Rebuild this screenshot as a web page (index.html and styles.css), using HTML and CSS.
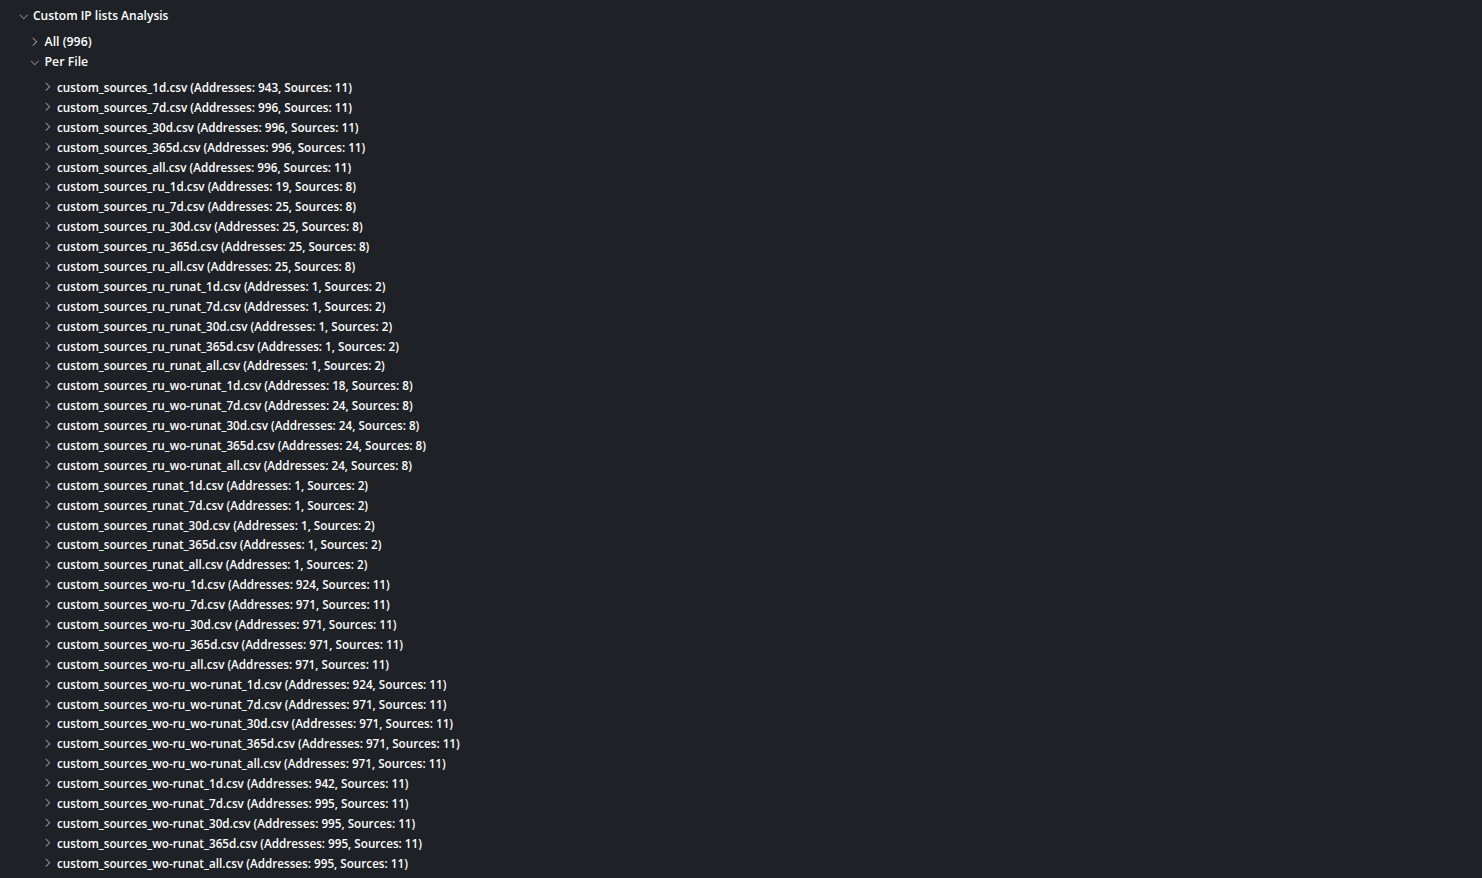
FILE: index.html
```html
<!DOCTYPE html>
<html>
<head>
<meta charset="utf-8">
<link rel="stylesheet" href="styles.css">
</head>
<body>
<div class="tree">
  <div class="row lvl0"><span class="chev down"></span><span class="label">Custom IP lists Analysis</span></div>
  <div class="row lvl1 first"><span class="chev right"></span><span class="label">All (996)</span></div>
  <div class="row lvl1"><span class="chev down"></span><span class="label">Per File</span></div>
  <div class="files">
    <div class="row lvl2"><span class="chev right"></span><span class="label">custom_sources_1d.csv (Addresses: 943, Sources: 11)</span></div>
    <div class="row lvl2"><span class="chev right"></span><span class="label">custom_sources_7d.csv (Addresses: 996, Sources: 11)</span></div>
    <div class="row lvl2"><span class="chev right"></span><span class="label">custom_sources_30d.csv (Addresses: 996, Sources: 11)</span></div>
    <div class="row lvl2"><span class="chev right"></span><span class="label">custom_sources_365d.csv (Addresses: 996, Sources: 11)</span></div>
    <div class="row lvl2"><span class="chev right"></span><span class="label">custom_sources_all.csv (Addresses: 996, Sources: 11)</span></div>
    <div class="row lvl2"><span class="chev right"></span><span class="label">custom_sources_ru_1d.csv (Addresses: 19, Sources: 8)</span></div>
    <div class="row lvl2"><span class="chev right"></span><span class="label">custom_sources_ru_7d.csv (Addresses: 25, Sources: 8)</span></div>
    <div class="row lvl2"><span class="chev right"></span><span class="label">custom_sources_ru_30d.csv (Addresses: 25, Sources: 8)</span></div>
    <div class="row lvl2"><span class="chev right"></span><span class="label">custom_sources_ru_365d.csv (Addresses: 25, Sources: 8)</span></div>
    <div class="row lvl2"><span class="chev right"></span><span class="label">custom_sources_ru_all.csv (Addresses: 25, Sources: 8)</span></div>
    <div class="row lvl2"><span class="chev right"></span><span class="label">custom_sources_ru_runat_1d.csv (Addresses: 1, Sources: 2)</span></div>
    <div class="row lvl2"><span class="chev right"></span><span class="label">custom_sources_ru_runat_7d.csv (Addresses: 1, Sources: 2)</span></div>
    <div class="row lvl2"><span class="chev right"></span><span class="label">custom_sources_ru_runat_30d.csv (Addresses: 1, Sources: 2)</span></div>
    <div class="row lvl2"><span class="chev right"></span><span class="label">custom_sources_ru_runat_365d.csv (Addresses: 1, Sources: 2)</span></div>
    <div class="row lvl2"><span class="chev right"></span><span class="label">custom_sources_ru_runat_all.csv (Addresses: 1, Sources: 2)</span></div>
    <div class="row lvl2"><span class="chev right"></span><span class="label">custom_sources_ru_wo-runat_1d.csv (Addresses: 18, Sources: 8)</span></div>
    <div class="row lvl2"><span class="chev right"></span><span class="label">custom_sources_ru_wo-runat_7d.csv (Addresses: 24, Sources: 8)</span></div>
    <div class="row lvl2"><span class="chev right"></span><span class="label">custom_sources_ru_wo-runat_30d.csv (Addresses: 24, Sources: 8)</span></div>
    <div class="row lvl2"><span class="chev right"></span><span class="label">custom_sources_ru_wo-runat_365d.csv (Addresses: 24, Sources: 8)</span></div>
    <div class="row lvl2"><span class="chev right"></span><span class="label">custom_sources_ru_wo-runat_all.csv (Addresses: 24, Sources: 8)</span></div>
    <div class="row lvl2"><span class="chev right"></span><span class="label">custom_sources_runat_1d.csv (Addresses: 1, Sources: 2)</span></div>
    <div class="row lvl2"><span class="chev right"></span><span class="label">custom_sources_runat_7d.csv (Addresses: 1, Sources: 2)</span></div>
    <div class="row lvl2"><span class="chev right"></span><span class="label">custom_sources_runat_30d.csv (Addresses: 1, Sources: 2)</span></div>
    <div class="row lvl2"><span class="chev right"></span><span class="label">custom_sources_runat_365d.csv (Addresses: 1, Sources: 2)</span></div>
    <div class="row lvl2"><span class="chev right"></span><span class="label">custom_sources_runat_all.csv (Addresses: 1, Sources: 2)</span></div>
    <div class="row lvl2"><span class="chev right"></span><span class="label">custom_sources_wo-ru_1d.csv (Addresses: 924, Sources: 11)</span></div>
    <div class="row lvl2"><span class="chev right"></span><span class="label">custom_sources_wo-ru_7d.csv (Addresses: 971, Sources: 11)</span></div>
    <div class="row lvl2"><span class="chev right"></span><span class="label">custom_sources_wo-ru_30d.csv (Addresses: 971, Sources: 11)</span></div>
    <div class="row lvl2"><span class="chev right"></span><span class="label">custom_sources_wo-ru_365d.csv (Addresses: 971, Sources: 11)</span></div>
    <div class="row lvl2"><span class="chev right"></span><span class="label">custom_sources_wo-ru_all.csv (Addresses: 971, Sources: 11)</span></div>
    <div class="row lvl2"><span class="chev right"></span><span class="label">custom_sources_wo-ru_wo-runat_1d.csv (Addresses: 924, Sources: 11)</span></div>
    <div class="row lvl2"><span class="chev right"></span><span class="label">custom_sources_wo-ru_wo-runat_7d.csv (Addresses: 971, Sources: 11)</span></div>
    <div class="row lvl2"><span class="chev right"></span><span class="label">custom_sources_wo-ru_wo-runat_30d.csv (Addresses: 971, Sources: 11)</span></div>
    <div class="row lvl2"><span class="chev right"></span><span class="label">custom_sources_wo-ru_wo-runat_365d.csv (Addresses: 971, Sources: 11)</span></div>
    <div class="row lvl2"><span class="chev right"></span><span class="label">custom_sources_wo-ru_wo-runat_all.csv (Addresses: 971, Sources: 11)</span></div>
    <div class="row lvl2"><span class="chev right"></span><span class="label">custom_sources_wo-runat_1d.csv (Addresses: 942, Sources: 11)</span></div>
    <div class="row lvl2"><span class="chev right"></span><span class="label">custom_sources_wo-runat_7d.csv (Addresses: 995, Sources: 11)</span></div>
    <div class="row lvl2"><span class="chev right"></span><span class="label">custom_sources_wo-runat_30d.csv (Addresses: 995, Sources: 11)</span></div>
    <div class="row lvl2"><span class="chev right"></span><span class="label">custom_sources_wo-runat_365d.csv (Addresses: 995, Sources: 11)</span></div>
    <div class="row lvl2"><span class="chev right"></span><span class="label">custom_sources_wo-runat_all.csv (Addresses: 995, Sources: 11)</span></div>
  </div>
</div>
</body>
</html>
```

FILE: styles.css
```css
html, body {
  margin: 0;
  padding: 0;
  background: #1e2126;
  height: 100%;
  overflow: hidden;
}
.tree {
  padding-top: 6px;
  font-family: "Open Sans", "Noto Sans", sans-serif;
  font-weight: 600;
  font-size: 11.7px;
  color: #ffffff;
}
.row {
  display: flex;
  align-items: center;
  height: 20px;
  white-space: nowrap;
}
.lvl0 { padding-left: 19px; font-size: 12px; }
.lvl1 { padding-left: 30px; font-size: 12.3px; }
.lvl1.first { margin-top: 6px; }
.files { margin-top: 5px; }
.lvl2 { padding-left: 43px; height: 19.9px; }
.chev {
  width: 14px;
  height: 10px;
  position: relative;
  flex: none;
}
.chev::before {
  content: "";
  position: absolute;
  width: 4.5px;
  height: 4.5px;
  border-right: 1.4px solid #8b8d91;
  border-bottom: 1.4px solid #8b8d91;
}
.chev.right::before {
  left: -0.5px;
  top: 2.2px;
  transform: rotate(-45deg);
}
.chev.down::before {
  left: 2px;
  top: 0.5px;
  transform: rotate(45deg);
}
.lvl1 .chev { width: 14.5px; }
.label { line-height: 20px; }
```
